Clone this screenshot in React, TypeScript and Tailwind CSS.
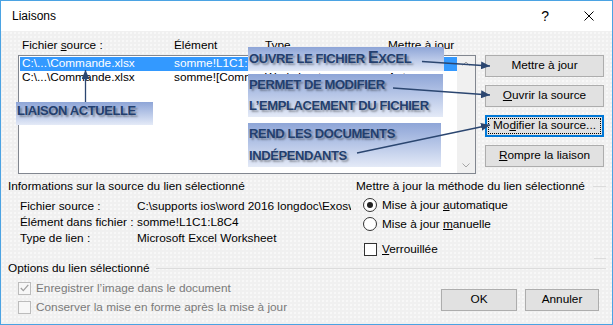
import React from "react";

function Btn({ children, className = "" }: { children: React.ReactNode; className?: string }) {
  return (
    <div
      className={`h-[22px] border border-[#adadad] bg-[#e1e1e1] flex items-center justify-center text-black leading-none ${className}`}
    >
      <span>{children}</span>
    </div>
  );
}

function Callout({
  className,
  children,
}: {
  className: string;
  children: React.ReactNode;
}) {
  return (
    <div
      className={`absolute bg-linear-to-b from-[#8ea5d7] to-[#e4eaf7] font-['Liberation_Sans',Arial,sans-serif] font-bold text-[13px] tracking-[-0.4px] text-[#233f6e] [text-shadow:2px_2px_2px_rgba(0,0,0,0.35)] whitespace-nowrap ${className}`}
    >
      {children}
    </div>
  );
}

export default function App() {
  return (
    <div className="relative w-[613px] h-[325px] overflow-hidden font-['Liberation_Sans',Arial,sans-serif] text-[11.8px] text-black">
      <div className="w-[613px] h-[325px] border border-[#4ba3e3] flex flex-col">
        {/* Title bar */}
        <div className="h-[30px] bg-white flex items-center shrink-0">
          <span className="ml-[11px] text-[12px] leading-[16px]">Liaisons</span>
          <span className="ml-auto text-[14px] leading-[16px] mr-[35px]">?</span>
          <svg width="10" height="10" viewBox="0 0 10 10" className="mr-[18px]">
            <path d="M0.5 0.5 L9.5 9.5 M9.5 0.5 L0.5 9.5" stroke="#000" strokeWidth="1" fill="none" />
          </svg>
        </div>

        {/* Body */}
        <div className="flex-1 bg-[#f0f0f0] bg-[radial-gradient(circle,#fbfbfb_0.6px,transparent_0.9px)] bg-size-[4px_4px] flex flex-col">
          {/* Top section */}
          <div className="flex pt-[6px]">
            <div className="ml-[17px] w-[458px]">
              <div className="h-[18px] flex leading-[16px] pl-[4px]">
                <span className="w-[152px]">
                  Fichier <u>s</u>ource :
                </span>
                <span className="w-[91px]">Élément</span>
                <span className="w-[123px]">Type</span>
                <span>Mettre à jour</span>
              </div>
              <div className="h-[119px] border border-[#828790] bg-white flex">
                <div className="flex-1 pt-[1px] pl-[1px]">
                  <div className="h-[14px] bg-[#3399ff] text-white flex items-center pl-[2px] whitespace-nowrap">
                    <span className="w-[152px]">C:\...\Commande.xlsx</span>
                    <span className="w-[91px] overflow-hidden">somme!L1C1:L8C4</span>
                    <span className="w-[123px]">Worksheet</span>
                    <span>Auto</span>
                  </div>
                  <div className="h-[14px] flex items-center pl-[2px] whitespace-nowrap">
                    <span className="w-[152px]">C:\...\Commande.xlsx</span>
                    <span className="w-[91px] overflow-hidden">somme![Commande</span>
                    <span className="w-[123px]">Worksheet</span>
                    <span>Auto</span>
                  </div>
                </div>
                <div className="w-[18px] bg-[#f0f0f0] flex flex-col justify-between items-center py-[5px]">
                  <svg width="8" height="5" viewBox="0 0 8 5">
                    <path d="M0.5 4.5 L4 1 L7.5 4.5" stroke="#a6a6a6" strokeWidth="1" fill="none" />
                  </svg>
                  <svg width="8" height="5" viewBox="0 0 8 5">
                    <path d="M0.5 0.5 L4 4 L7.5 0.5" stroke="#a6a6a6" strokeWidth="1" fill="none" />
                  </svg>
                </div>
              </div>
            </div>
            <div className="ml-[9px] mt-[18px] w-[119px] flex flex-col gap-[8px]">
              <Btn>
                Mettre à <u>j</u>our
              </Btn>
              <Btn>
                <u>O</u>uvrir la source
              </Btn>
              <div className="h-[22px] border-2 border-[#0078d7] bg-[#e1e1e1] p-px">
                <div className="h-full border border-dotted border-black flex items-center justify-center leading-none">
                  <span>
                    Mo<u>d</u>ifier la source...
                  </span>
                </div>
              </div>
              <Btn>
                <u>R</u>ompre la liaison
              </Btn>
            </div>
          </div>

          {/* Middle section */}
          <div className="flex mt-[4px] h-[82px]">
            <div className="ml-[7px] w-[343px] mr-[5px] overflow-hidden whitespace-nowrap">
              <div className="h-[16px] leading-[16px]">Informations sur la source du lien sélectionné</div>
              <div className="mt-[4px] pl-[12px] leading-[16px]">
                <div className="flex h-[16px]">
                  <span className="w-[117px] shrink-0">Fichier source :</span>
                  <span className="w-[214px] overflow-hidden">C:\supports ios\word 2016 longdoc\Exosword</span>
                </div>
                <div className="flex h-[16px]">
                  <span className="w-[117px] shrink-0">Élément dans fichier :</span>
                  <span>somme!L1C1:L8C4</span>
                </div>
                <div className="flex h-[16px]">
                  <span className="w-[117px] shrink-0">Type de lien :</span>
                  <span>Microsoft Excel Worksheet</span>
                </div>
              </div>
            </div>
            <div className="flex-1 flex flex-col mr-[6px]">
              <div className="h-[16px] flex items-center whitespace-nowrap">
                <span className="leading-[16px]">Mettre à jour la méthode du lien sélectionné</span>
                <div className="ml-[8px] flex-1 h-px bg-[#dcdcdc]" />
              </div>
              <div className="ml-[7px] mt-[3px] h-[16px] flex items-center">
                <div className="w-[14px] h-[14px] rounded-full border border-[#333] bg-white flex items-center justify-center">
                  <div className="w-[6px] h-[6px] rounded-full bg-[#222]" />
                </div>
                <span className="ml-[5px] leading-[16px]">
                  Mise à jour <u>a</u>utomatique
                </span>
              </div>
              <div className="ml-[7px] mt-[3px] h-[16px] flex items-center">
                <div className="w-[14px] h-[14px] rounded-full border border-[#333] bg-white" />
                <span className="ml-[5px] leading-[16px]">
                  Mise à jour <u>m</u>anuelle
                </span>
              </div>
              <div className="ml-[8px] mt-[9px] h-[16px] flex items-center">
                <div className="w-[13px] h-[13px] border border-[#333] bg-white" />
                <span className="ml-[5px] leading-[16px]">
                  <u>V</u>errouillée
                </span>
              </div>
              <div className="mt-[1px] ml-auto w-[12px] h-px bg-[#dcdcdc]" />
            </div>
          </div>

          {/* Options header */}
          <div className="h-[16px] flex items-center ml-[7px] mr-[6px] whitespace-nowrap">
            <span className="leading-[16px]">Options du lien sélectionné</span>
            <div className="ml-[6px] flex-1 h-px bg-[#dcdcdc]" />
          </div>

          {/* Bottom section */}
          <div className="flex">
            <div className="ml-[17px] text-[#7a7a7a]">
              <div className="mt-[4px] h-[16px] flex items-center">
                <div className="w-[13px] h-[13px] border border-[#bcbcbc] bg-[#f7f7f7] flex items-center justify-center">
                  <svg width="9" height="8" viewBox="0 0 9 8">
                    <path d="M0.8 4 L3.3 6.6 L8.3 0.8" stroke="#a0a0a0" strokeWidth="1.3" fill="none" />
                  </svg>
                </div>
                <span className="ml-[5px] leading-[16px]">Enregistrer l’image dans le document</span>
              </div>
              <div className="mt-[3px] h-[16px] flex items-center">
                <div className="w-[13px] h-[13px] border border-[#bcbcbc] bg-[#f7f7f7]" />
                <span className="ml-[5px] leading-[16px]">Conserver la mise en forme après la mise à jour</span>
              </div>
            </div>
            <div className="ml-auto mr-[13px] mt-[13px] flex gap-[8px]">
              <Btn className="w-[76px]">OK</Btn>
              <Btn className="w-[74px]">Annuler</Btn>
            </div>
          </div>
        </div>
      </div>

      {/* Callouts */}
      <Callout className="left-[248px] top-[47px] w-[196px] h-[24px] leading-[22px] pl-[1px]">
        OUVRE LE FICHIER <span className="text-[16px]">E</span>XCEL
      </Callout>
      <Callout className="left-[248px] top-[74px] w-[195px] h-[43px] leading-[21px] pl-[1px]">
        <div>PERMET DE MODIFIER</div>
        <div>L’EMPLACEMENT DU FICHIER</div>
      </Callout>
      <Callout className="left-[248px] top-[123px] w-[193px] h-[44px] leading-[22px] pl-[1px]">
        <div>REND LES DOCUMENTS</div>
        <div>INDÉPENDANTS</div>
      </Callout>
      <Callout className="left-[16px] top-[102px] w-[137px] h-[23px] leading-[18px] pl-[1px]">
        LIAISON ACTUELLE
      </Callout>

      {/* Arrows */}
      <svg className="absolute left-0 top-0 pointer-events-none" width="613" height="325" viewBox="0 0 613 325">
        <defs>
          <marker id="ah" markerUnits="userSpaceOnUse" markerWidth="10" markerHeight="8" refX="9" refY="4" orient="auto">
            <path d="M0 0 L9 4 L0 8 Z" fill="#2b4670" />
          </marker>
        </defs>
        <g stroke="#2b4670" strokeWidth="1.3" fill="none" markerEnd="url(#ah)">
          <line x1="422" y1="61.5" x2="490" y2="66" />
          <line x1="393" y1="88" x2="490" y2="95" />
          <line x1="357" y1="153" x2="490" y2="125" />
          <line x1="85.5" y1="102" x2="85.5" y2="70" />
        </g>
      </svg>
    </div>
  );
}
